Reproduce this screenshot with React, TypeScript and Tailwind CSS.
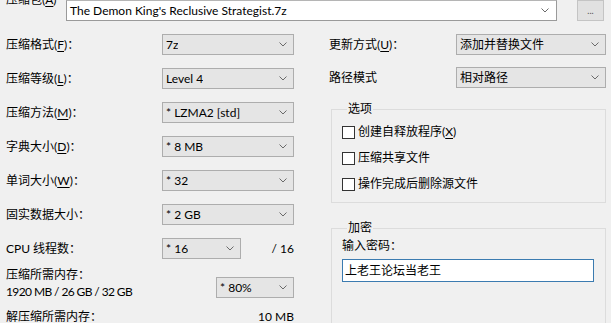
import React from "react";

function Chevron() {
  return (
    <svg width="8" height="5" viewBox="0 0 8 5" className="shrink-0">
      <polyline points="0.5,0.5 4,4 7.5,0.5" fill="none" stroke="#6a6a6a" strokeWidth="1" />
    </svg>
  );
}

type ComboProps = {
  value: string;
  className?: string;
};

function Combo({ value, className = "" }: ComboProps) {
  return (
    <div
      className={`flex h-[21px] items-center justify-between border border-[#adadad] bg-[#e5e5e5] pl-[3px] pr-[6px] ${className}`}
    >
      <span className="truncate leading-[19px]">{value}</span>
      <Chevron />
    </div>
  );
}

function Acc({ text, k, colon = true }: { text: string; k: string; colon?: boolean }) {
  return (
    <span>
      {text}(<span className="underline underline-offset-2">{k}</span>)
      {colon ? "：" : null}
    </span>
  );
}

function Row({ label, children }: { label: React.ReactNode; children: React.ReactNode }) {
  return (
    <div className="flex h-[21px] items-center">
      <div className="w-[156px] shrink-0 leading-[16px]">{label}</div>
      {children}
    </div>
  );
}

function Check({ children }: { children: React.ReactNode }) {
  return (
    <div className="flex h-[16px] items-center gap-[3px]">
      <span className="h-[13px] w-[13px] shrink-0 border border-[#333] bg-white" />
      <span className="leading-[16px]">{children}</span>
    </div>
  );
}

export default function App() {
  return (
    <div className="relative h-[323px] w-[611px] overflow-hidden bg-[#f0f0f0] font-['Lato','Noto_Sans_CJK_SC',sans-serif] text-[12px] text-black">
      {/* archive name row */}
      <div className="flex h-[21px] items-start">
        <div className="-mt-[8px] w-[66px] shrink-0 pl-[6px] leading-[16px]">
          <Acc text="压缩包" k="A" colon={false} />
        </div>
        <div className="flex h-[21px] w-[491px] items-center justify-between border border-[#9a9a9a] border-t-[#b5b5b5] bg-white pl-[3px] pr-[7px]">
          <span className="leading-[19px]">The Demon King's Reclusive Strategist.7z</span>
          <Chevron />
        </div>
        <div className="ml-[20px] flex h-[21px] w-[27px] items-center justify-center border border-[#c4c4c4] bg-[#e1e1e1] text-[9px] leading-none text-[#555]">
          ...
        </div>
      </div>

      <div className="mt-[13px] flex">
        {/* left column */}
        <div className="ml-[6px] flex w-[288px] flex-col">
          <div className="flex flex-col gap-[13px]">
            <Row label={<Acc text="压缩格式" k="F" />}>
              <Combo value="7z" className="w-[132px]" />
            </Row>
            <Row label={<Acc text="压缩等级" k="L" />}>
              <Combo value="Level 4" className="w-[132px]" />
            </Row>
            <Row label={<Acc text="压缩方法" k="M" />}>
              <Combo value="* LZMA2 [std]" className="w-[132px]" />
            </Row>
            <Row label={<Acc text="字典大小" k="D" />}>
              <Combo value="* 8 MB" className="w-[132px]" />
            </Row>
            <Row label={<Acc text="单词大小" k="W" />}>
              <Combo value="* 32" className="w-[132px]" />
            </Row>
            <Row label="固实数据大小：">
              <Combo value="* 2 GB" className="w-[132px]" />
            </Row>
            <Row label="CPU 线程数：">
              <Combo value="* 16" className="w-[79px]" />
              <span className="ml-auto leading-[16px]">/ 16</span>
            </Row>
          </div>

          <div className="mt-[7px] flex">
            <div className="flex flex-col leading-[17px]">
              <span>压缩所需内存：</span>
              <span className="tracking-[-0.6px]">1920 MB / 26 GB / 32 GB</span>
            </div>
            <Combo value="* 80%" className="ml-auto mt-[11px] w-[78px]" />
          </div>

          <div className="mt-[8px] flex leading-[17px]">
            <span>解压缩所需内存：</span>
            <span className="ml-auto">10 MB</span>
          </div>
        </div>

        {/* right column */}
        <div className="ml-[35px] flex w-[277px] flex-col">
          <div className="flex h-[21px] items-center">
            <div className="w-[127px] shrink-0 leading-[16px]">
              <Acc text="更新方式" k="U" />
            </div>
            <Combo value="添加并替换文件" className="w-[150px]" />
          </div>
          <div className="mt-[12px] flex h-[21px] items-center">
            <div className="w-[127px] shrink-0 leading-[16px]">路径模式</div>
            <Combo value="相对路径" className="w-[150px]" />
          </div>

          <fieldset className="ml-[2px] mt-[13px] w-[275px] border border-[#dcdcdc] pb-[10px] pl-[10px]">
            <legend className="ml-[5px] px-[1px] leading-[16px]">选项</legend>
            <div className="mt-[7px] flex flex-col gap-[10px]">
              <Check>
                创建自释放程序(<span className="underline underline-offset-2">X</span>)
              </Check>
              <Check>压缩共享文件</Check>
              <Check>操作完成后删除源文件</Check>
            </div>
          </fieldset>

          <fieldset className="ml-[2px] mt-[17px] h-[140px] w-[275px] border border-[#dcdcdc] pl-[10px]">
            <legend className="ml-[5px] px-[1px] leading-[16px]">加密</legend>
            <div className="mt-[2px] leading-[16px]">输入密码：</div>
            <div className="mt-[5px] flex h-[23px] w-[252px] items-center border border-[#3b7bb0] bg-white pl-[2px]">
              <span className="leading-[16px]">上老王论坛当老王</span>
            </div>
          </fieldset>
        </div>
      </div>
    </div>
  );
}
